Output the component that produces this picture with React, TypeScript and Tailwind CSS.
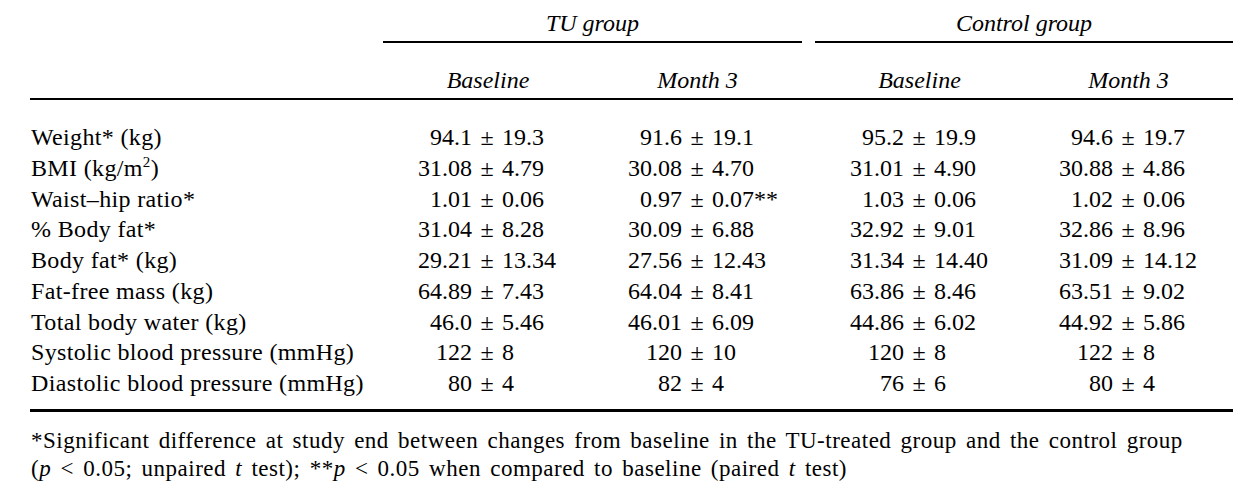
import React from "react";

type Row = { label: React.ReactNode; vals: [string, string][] };

const rows: Row[] = [
  { label: "Weight* (kg)", vals: [["94.1", "19.3"], ["91.6", "19.1"], ["95.2", "19.9"], ["94.6", "19.7"]] },
  {
    label: (
      <>
        BMI (kg/m<span className="text-[15px] leading-[0] relative top-[-9px]">2</span>)
      </>
    ),
    vals: [["31.08", "4.79"], ["30.08", "4.70"], ["31.01", "4.90"], ["30.88", "4.86"]],
  },
  { label: "Waist–hip ratio*", vals: [["1.01", "0.06"], ["0.97", "0.07**"], ["1.03", "0.06"], ["1.02", "0.06"]] },
  { label: "% Body fat*", vals: [["31.04", "8.28"], ["30.09", "6.88"], ["32.92", "9.01"], ["32.86", "8.96"]] },
  { label: "Body fat* (kg)", vals: [["29.21", "13.34"], ["27.56", "12.43"], ["31.34", "14.40"], ["31.09", "14.12"]] },
  { label: "Fat-free mass (kg)", vals: [["64.89", "7.43"], ["64.04", "8.41"], ["63.86", "8.46"], ["63.51", "9.02"]] },
  { label: "Total body water (kg)", vals: [["46.0", "5.46"], ["46.01", "6.09"], ["44.86", "6.02"], ["44.92", "5.86"]] },
  { label: "Systolic blood pressure (mmHg)", vals: [["122", "8"], ["120", "10"], ["120", "8"], ["122", "8"]] },
  { label: "Diastolic blood pressure (mmHg)", vals: [["80", "4"], ["82", "4"], ["76", "6"], ["80", "4"]] },
];

const colW = ["w-[210px]", "w-[209px]", "w-[209px] ml-[13px]", "w-[209px]"];

function Val({ a, b }: { a: string; b: string }) {
  return (
    <div className="flex">
      <span className="w-[89px] text-right">{a}</span>
      <span className="w-[18px] mx-[6px] text-center">±</span>
      <span>{b}</span>
    </div>
  );
}

export default function App() {
  return (
    <div className="w-[1245px] h-[503px] bg-white text-black overflow-hidden font-['Liberation_Serif','DejaVu_Serif',serif]">
      <div className="pl-[30px] w-[1233px]">
        {/* group header */}
        <div className="flex pt-[8px] text-[24px] leading-[30px] italic">
          <div className="w-[353px]" />
          <div className="w-[419px] flex flex-col">
            <div className="text-center pb-[3px]">TU group</div>
            <div className="h-[2px] bg-black" />
          </div>
          <div className="w-[418px] ml-[13px] flex flex-col">
            <div className="text-center pb-[3px]">Control group</div>
            <div className="h-[2px] bg-black" />
          </div>
        </div>
        {/* sub header */}
        <div className="flex pt-[22px] pb-[3px] text-[24px] leading-[30px] italic">
          <div className="w-[353px]" />
          <div className="w-[210px] text-center">Baseline</div>
          <div className="w-[209px] text-center">Month 3</div>
          <div className="w-[209px] ml-[13px] text-center">Baseline</div>
          <div className="w-[209px] text-center">Month 3</div>
        </div>
        <div className="h-[2px] bg-black" />
        {/* body */}
        <div className="pt-[22px] pb-[10px] text-[24px] leading-[30.75px]">
          {rows.map((r, i) => (
            <div key={i} className="flex h-[30.75px]">
              <div className="w-[353px] pl-[1px] whitespace-nowrap tracking-[0.35px]">{r.label}</div>
              {r.vals.map((v, j) => (
                <div key={j} className={colW[j] + " whitespace-nowrap"}>
                  <Val a={v[0]} b={v[1]} />
                </div>
              ))}
            </div>
          ))}
        </div>
        <div className="h-[3px] bg-black" />
        <div className="pt-[15px] pl-[1px] text-[23px] leading-[28px] whitespace-nowrap tracking-[0.5px] [word-spacing:3px]">
          *Significant difference at study end between changes from baseline in the TU-treated group and the control group
          <br />
          (<i>p</i> &lt; 0.05; unpaired <i>t</i> test); **<i>p</i> &lt; 0.05 when compared to baseline (paired <i>t</i> test)
        </div>
      </div>
    </div>
  );
}
